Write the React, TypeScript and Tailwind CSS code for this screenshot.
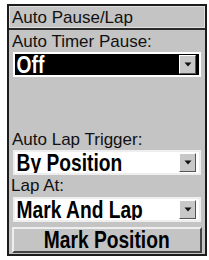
import React from "react";

const bold = { fontFamily: '"Liberation Sans", Arial, sans-serif' };

function Arrow() {
  return (
    <div className="w-[17px] h-[19px] bg-[#c8c8c8] border border-t-white border-l-white border-r-[#555] border-b-[#555] flex items-center justify-center shrink-0">
      <svg width="8" height="5" viewBox="0 0 8 5">
        <polygon points="0.5,0.5 7.5,0.5 4,4.5" fill="#111" />
      </svg>
    </div>
  );
}

function Field({ text, dark }: { text: string; dark?: boolean }) {
  return (
    <div className={`mx-[4px] h-[25px] border-2 flex items-center justify-between pr-[3px] overflow-hidden ${dark ? "bg-black border-white text-white" : "bg-white border-[#eee] text-black"}`}>
      <span className="pl-[2px] inline-block origin-left scale-x-[0.8] whitespace-nowrap font-bold text-[24px] leading-none" style={bold}>{text}</span>
      <Arrow />
    </div>
  );
}

export default function App() {
  return (
    <div className="w-[209px] h-[260px] bg-white pt-[4px] pl-[7px]" style={{ fontFamily: '"Liberation Sans", Arial, sans-serif' }}>
      <div className="w-[200px] h-[252px] border-2 border-[#1c1c1c] bg-[#c4c4c4] flex flex-col">
        <div className="h-[24px] border-b-2 border-[#2a2a2a] flex items-center">
          <div className="h-full w-full border border-[#e0e0e0] flex items-center pl-[2px] text-[17px] text-[#111] leading-none">Auto Pause/Lap</div>
        </div>
        <div className="h-[22px] pl-[3px] pt-[2px] text-[17px] text-[#111] leading-[19px]">Auto Timer Pause:</div>
        <Field text="Off" dark />
        <div className="h-[50px]" />
        <div className="h-[23px] pl-[3px] pt-[3px] text-[17px] text-[#111] leading-[19px]">Auto Lap Trigger:</div>
        <Field text="By Position" />
        <div className="h-[22px] pl-[2px] pt-[1px] text-[17px] text-[#111] leading-[19px]">Lap At:</div>
        <Field text="Mark And Lap" />
        <div className="h-[5px]" />
        <div className="mx-[3px] h-[26px] bg-[#c4c4c4] border-2 border-t-[#eee] border-l-[#eee] border-r-[#444] border-b-[#444] flex items-center justify-center overflow-hidden">
          <span className="inline-block scale-x-[0.8] whitespace-nowrap font-bold text-[24px] leading-none text-black" style={bold}>Mark Position</span>
        </div>
      </div>
    </div>
  );
}
